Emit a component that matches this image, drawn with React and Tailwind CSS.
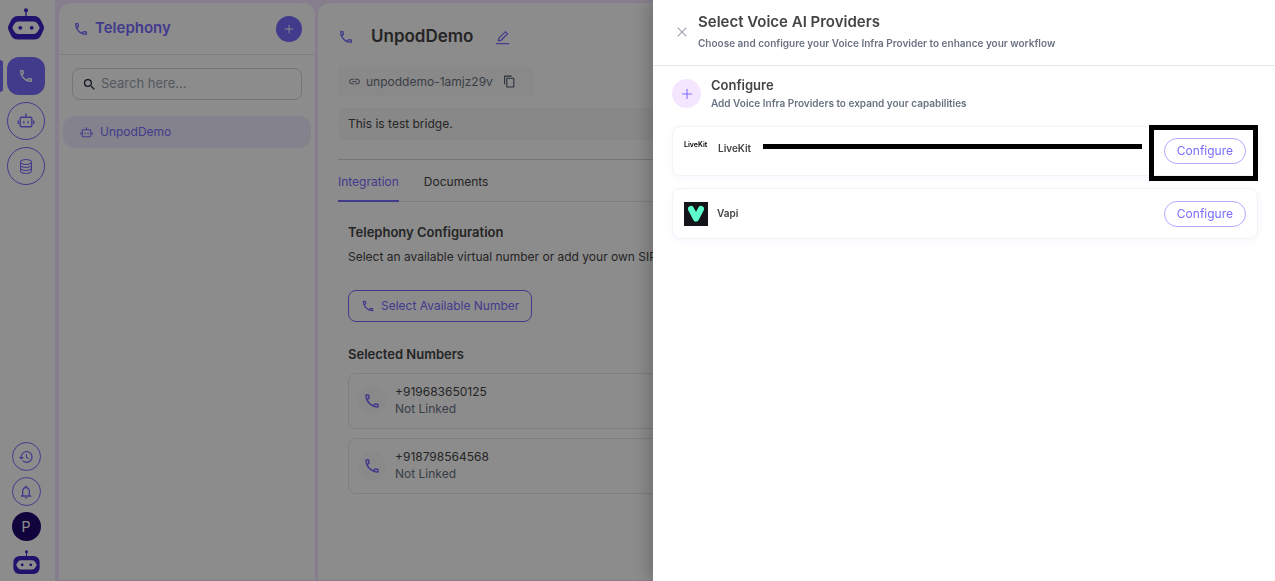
import {
  MdOutlineLocalPhone,
  MdHistory,
  MdOutlineNotifications,
  MdSearch,
  MdLink,
  MdContentCopy,
} from "react-icons/md";
import { AiOutlinePlus, AiOutlineEdit, AiOutlineClose } from "react-icons/ai";
import { BsDatabase } from "react-icons/bs";

function Logo({ className, square }) {
  return (
    <svg viewBox="0 0 36 32" className={className} fill="none" aria-hidden="true">
      <circle cx="18" cy="2.3" r="2" fill="#3a24c8" />
      <path d="M18 3v6" stroke="#3a24c8" strokeWidth="1.3" />
      {square ? (
        <rect x="0.5" y="8" width="35" height="24" rx="8" fill="#3a24c8" />
      ) : (
        <path d="M10 8h16a8 8 0 0 1 7 4.500l2.500 5q1 2.200 0 4.500l-2 4.500a8 8 0 0 1-7.500 5h-16a8 8 0 0 1-7.500-5l-2-4.500q-1-2.300 0-4.500l2.500-5a8 8 0 0 1 7-4.500z" fill="#3a24c8" />
      )}
      <path d="M10.500 13.500h15q3 0 4.500 3l1.200 2q.8 1.300 0 2.600l-1.200 1.900q-1.500 3-4.500 3h-15q-3 0-4.500-3l-1.200-1.900q-.8-1.300 0-2.600l1.200-2q1.500-3 4.500-3z" fill="#fff" />
      <circle cx="12.300" cy="19.800" r="1.900" fill="#3a24c8" />
      <circle cx="23.700" cy="19.800" r="1.900" fill="#3a24c8" />
    </svg>
  );
}

function RobotIcon({ className }) {
  return (
    <svg viewBox="0 0 18 18" className={className} fill="none" stroke="currentColor" strokeWidth="1.4" strokeLinecap="round" aria-hidden="true">
      <path d="M9 2v3M1.300 9v2.600M16.700 9v2.600" />
      <rect x="3.200" y="5.200" width="11.600" height="9.600" rx="1.200" />
      <path d="M6.800 10v.4M11.200 10v.4" strokeWidth="1.700" />
    </svg>
  );
}

function VapiLogo() {
  return (
    <svg viewBox="0 0 24 24" className="size-6" aria-hidden="true">
      <rect width="24" height="24" fill="#14151a" />
      <path d="M7 7 12 16.500 17 7" fill="none" stroke="#5dfeca" strokeWidth="6" strokeLinecap="round" strokeLinejoin="round" />
    </svg>
  );
}

const railCircle =
  "flex items-center justify-center rounded-full border border-[#796cff] text-[#796cff]";

function Rail() {
  return (
    <nav aria-label="Main" className="flex w-[55px] shrink-0 flex-col items-center bg-white pt-2 pr-[3px] pb-[6px]">
      <Logo className="h-8 w-9" />
      <div className="relative mt-[17px] flex w-full flex-col items-center gap-[7px]">
        <span className="absolute top-[3px] left-0 h-8 w-[3px] rounded-r-sm bg-[#796cff]" />
        <button aria-label="Telephony" className="flex size-[38px] items-center justify-center rounded-xl bg-[#796cff] text-white">
          <MdOutlineLocalPhone size={16} />
        </button>
        <button aria-label="Agents" className={`${railCircle} size-[38px]`}>
          <RobotIcon className="size-[18px]" />
        </button>
        <button aria-label="Knowledge base" className={`${railCircle} size-[38px]`}>
          <BsDatabase size={16} />
        </button>
      </div>
      <div className="mt-auto flex flex-col items-center gap-[6px]">
        <button aria-label="History" className={`${railCircle} size-[29px]`}>
          <MdHistory size={16} />
        </button>
        <button aria-label="Notifications" className={`${railCircle} size-[29px]`}>
          <MdOutlineNotifications size={16} />
        </button>
        <button aria-label="Profile" className="flex size-[29px] items-center justify-center rounded-full bg-[#200970] text-sm text-white">P</button>
        <Logo className="mt-[2px] h-[26px] w-[27px]" square />
      </div>
    </nav>
  );
}

function BridgeList() {
  return (
    <section className="flex w-64 shrink-0 flex-col overflow-hidden rounded-t-xl bg-white">
      <header className="flex h-[52px] items-center justify-between border-b border-gray-200 pr-[13px] pl-[14px]">
        <h2 className="flex items-center gap-[6px] text-[15px] font-semibold text-[#796cff]">
          <MdOutlineLocalPhone size={16} />
          Telephony
        </h2>
        <button aria-label="Add bridge" className="flex size-[26px] items-center justify-center rounded-full bg-[#796cff] text-white">
          <AiOutlinePlus size={12} />
        </button>
      </header>
      <label className="mx-[13px] mt-[13px] flex h-8 items-center gap-1 rounded-lg border border-gray-300 px-[9px] text-gray-800">
        <MdSearch size={15} className="shrink-0" />
        <input type="search" aria-label="Search" placeholder="Search here..." className="w-full min-w-0 bg-transparent text-[13px] outline-none placeholder:text-gray-400" />
      </label>
      <a href="#unpoddemo" className="mx-1 mt-4 flex h-8 items-center gap-[7px] rounded-xl bg-[#f0edff] px-[17px] text-xs text-[#796cff]">
        <RobotIcon className="size-[13px]" />
        UnpodDemo
      </a>
    </section>
  );
}

function NumberCard({ number }) {
  return (
    <li className="flex h-14 items-center gap-[9px] rounded-lg border border-gray-200 px-[9px]">
      <span className="flex size-7 items-center justify-center rounded-full bg-[#f9f9f9] text-[#796cff]">
        <MdOutlineLocalPhone size={18} />
      </span>
      <div className="pb-[2px] text-xs leading-[17px]">
        <p>{number}</p>
        <p className="text-gray-500">Not Linked</p>
      </div>
    </li>
  );
}

function Detail() {
  return (
    <main className="min-w-0 flex-1 overflow-hidden rounded-t-xl bg-white px-5 pt-[18px] text-[#444]">
      <div className="flex h-8 items-center">
        <MdOutlineLocalPhone size={16} className="text-[#796cff]" />
        <h1 className="ml-[17px] text-[17px] font-semibold">UnpodDemo</h1>
        <button aria-label="Edit name" className="ml-[21px] text-[#796cff]">
          <AiOutlineEdit size={17} />
        </button>
      </div>
      <div className="mt-[14px] flex h-[29px] w-[195px] items-center bg-[#fafafa] px-[10px] text-xs text-gray-500">
        <MdLink size={13} />
        <span className="ml-[5px]">unpoddemo-1amjz29v</span>
        <button aria-label="Copy" className="mr-[7px] ml-auto text-gray-600">
          <MdContentCopy size={13} />
        </button>
      </div>
      <p className="mt-3 rounded-lg bg-[#f7f7f7] px-[10px] py-2 text-xs">This is test bridge.</p>
      <div role="tablist" className="mt-[19px] flex gap-[25px] border-t border-b border-t-gray-300 border-b-gray-200 text-xs leading-[18px]">
        <button role="tab" aria-selected="true" className="-mb-px border-b-2 border-[#796cff] pt-[13px] pb-[9px] text-[#796cff]">Integration</button>
        <button role="tab" aria-selected="false" className="pt-[13px] pb-[10px]">Documents</button>
      </div>
      <div className="pt-5 pl-[10px]">
        <h3 className="text-[13px] leading-5 font-semibold">Telephony Configuration</h3>
        <p className="mt-[5px] text-xs leading-5 whitespace-nowrap">Select an available virtual number or add your own SIP trunk</p>
        <button className="mt-[23px] flex h-8 items-center gap-[6px] rounded-lg border border-[#796cff] px-3 text-xs text-[#796cff]">
          <MdOutlineLocalPhone size={14} />
          Select Available Number
        </button>
        <h3 className="mt-[22px] text-[13px] leading-5 font-semibold">Selected Numbers</h3>
        <ul className="mt-[9px] flex flex-col gap-[9px]">
          <NumberCard number="+919683650125" />
          <NumberCard number="+918798564568" />
        </ul>
      </div>
    </main>
  );
}

function ConfigureButton() {
  return (
    <button className="h-[26px] rounded-full border border-[#b3a9ff] px-3 text-xs font-normal text-[#796cff]">Configure</button>
  );
}

const providerCard =
  "flex items-center rounded-lg border border-[#f3f3f6] bg-white px-[11px] shadow-[0_2px_6px_rgba(121,108,255,0.06)]";

function ProviderDrawer() {
  return (
    <aside role="dialog" aria-label="Select Voice AI Providers" className="fixed inset-y-0 right-0 w-[622px] max-w-full bg-white text-[#444] shadow-[-6px_0_16px_rgba(0,0,0,0.2)]">
      <header className="flex items-center gap-[9px] border-b border-gray-200 px-[22px] pt-3 pb-[14px]">
        <button aria-label="Close" className="text-gray-400">
          <AiOutlineClose size={14} />
        </button>
        <div>
          <h2 className="text-[15px] leading-5 font-semibold">Select Voice AI Providers</h2>
          <p className="mt-[3px] text-[10px] leading-4 font-semibold text-gray-500">Choose and configure your Voice Infra Provider to enhance your workflow</p>
        </div>
      </header>
      <div className="pt-[9px] pr-[17px] pl-[19px]">
        <div className="flex items-center gap-[10px]">
          <span className="flex size-[29px] items-center justify-center rounded-full bg-[#f4e6ff] text-[#796cff]">
            <AiOutlinePlus size={14} />
          </span>
          <div>
            <h3 className="text-[13px] leading-5 font-semibold">Configure</h3>
            <p className="text-[10px] leading-[17px] font-semibold text-gray-500">Add Voice Infra Providers to expand your capabilities</p>
          </div>
        </div>
        <ul className="mt-[14px] flex flex-col gap-3 text-[10px] font-semibold">
          <li className={`${providerCard} relative h-[50px]`}>
            <span className="mb-3 w-[25px] text-[7px] text-black">LiveKit</span>
            <span className="mb-[6px] ml-[9px]">LiveKit</span>
            <span className="mr-[22px] mb-[10px] ml-3 h-[5px] flex-1 bg-black" />
            <ConfigureButton />
            <span className="pointer-events-none absolute -top-[2px] -right-px h-14 w-[109px] border-[5px] border-black" />
          </li>
          <li className={`${providerCard} h-[51px]`}>
            <VapiLogo />
            <span className="ml-[9px] flex-1">Vapi</span>
            <ConfigureButton />
          </li>
        </ul>
      </div>
    </aside>
  );
}

export default function App() {
  return (
    <div className="flex h-screen overflow-hidden bg-white font-[Inter,sans-serif]">
      <Rail />
      <div className="flex min-w-0 flex-1 gap-[3px] bg-[#f4e6ff] pt-[3px] pb-px pl-1">
        <BridgeList />
        <Detail />
      </div>
      <div className="fixed inset-0 bg-black/45" />
      <ProviderDrawer />
    </div>
  );
}
